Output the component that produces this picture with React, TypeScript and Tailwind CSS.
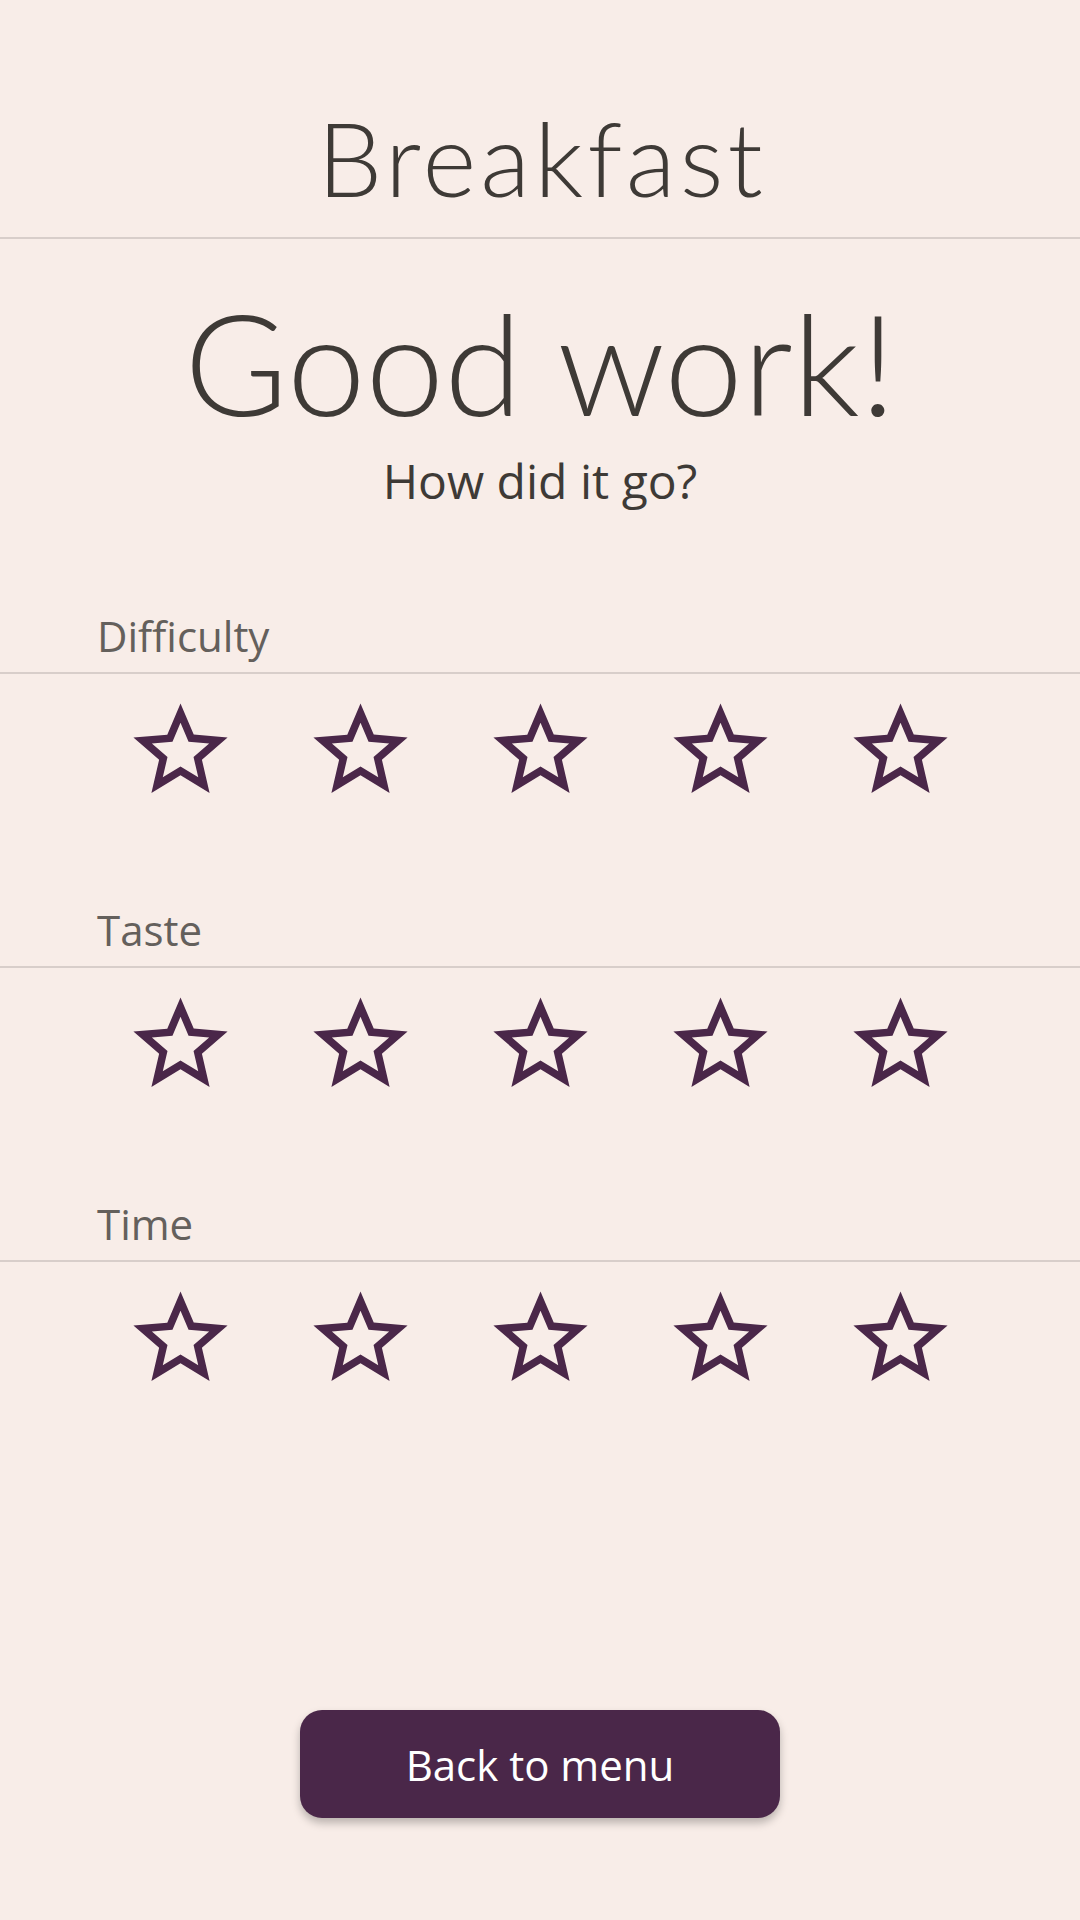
import React from 'react'

const titleFont = { fontFamily: '"Lato", "Noto Sans", sans-serif' }
const bodyFont = { fontFamily: '"Open Sans", "Noto Sans", sans-serif' }

function StarOutline() {
  return (
    <svg viewBox="0 0 24 24" className="w-[113px] h-[113px] fill-[#4a2749]">
      <path d="M22 9.24l-7.19-.62L12 2 9.19 8.63 2 9.24l5.46 4.73L5.82 21 12 17.27 18.18 21l-1.63-7.03L22 9.24zM12 15.4l-3.76 2.27 1-4.28-3.32-2.88 4.38-.38L12 6.1l1.71 4.04 4.38.38-3.32 2.88 1 4.28L12 15.4z" />
    </svg>
  )
}

function RatingSection({ label }: { label: string }) {
  return (
    <section className="mb-[100px]">
      <div className="border-b-2 border-[#d8ceca] pl-[97px] pt-[2px] pb-[15px]">
        <p className="text-[42px] leading-none text-[#64605c]" style={bodyFont}>
          {label}
        </p>
      </div>
      <div className="grid grid-cols-5 px-[90px] mt-[20px]">
        {[0, 1, 2, 3, 4].map((i) => (
          <button key={i} className="flex justify-center">
            <StarOutline />
          </button>
        ))}
      </div>
    </section>
  )
}

export default function App() {
  return (
    <main className="min-h-[1920px] w-[1080px] bg-[#f8ede8] flex flex-col text-[#3e3a36]">
      {/* Header */}
      <header className="h-[239px] pt-[106px] border-b-2 border-[#d8ceca]">
        <h1
          className="text-center text-[103px] leading-none font-light tracking-[4px] pl-[4px]"
          style={titleFont}
        >
          Breakfast
        </h1>
      </header>

      <div className="mt-[52px] text-center">
        <h2 className="text-[141px] leading-none font-light" style={titleFont}>
          Good work!
        </h2>
        <p className="mt-[25px] text-[48px] leading-none" style={bodyFont}>
          How did it go?
        </p>
      </div>

      <div className="mt-[108px]">
        <RatingSection label="Difficulty" />
        <RatingSection label="Taste" />
        <RatingSection label="Time" />
      </div>

      <div className="mt-auto pb-[102px] flex justify-center">
        <button
          className="w-[480px] h-[108px] rounded-[22px] bg-[#4a2749] text-white text-[42px] shadow-[0_5px_8px_rgba(0,0,0,0.25)]"
          style={bodyFont}
        >
          Back to menu
        </button>
      </div>
    </main>
  )
}
